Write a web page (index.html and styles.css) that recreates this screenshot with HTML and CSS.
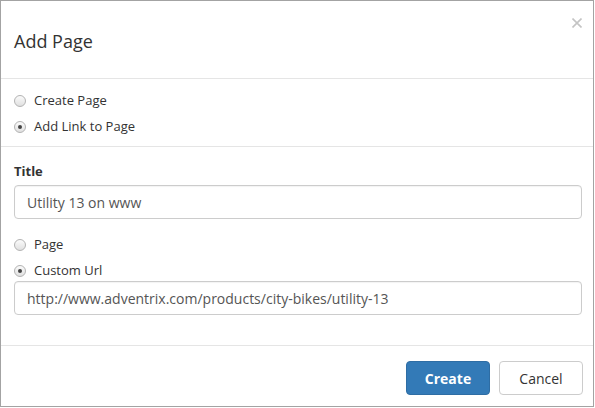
FILE: index.html
```html
<!DOCTYPE html>
<html>
<head>
<meta charset="utf-8">
<link rel="stylesheet" href="styles.css">
</head>
<body>
<div class="modal">
  <div class="modal-header">
    <h4 class="modal-title">Add Page</h4>
    <button class="close" type="button" aria-label="Close">
      <svg width="10" height="10" viewBox="0 0 10 10"><path d="M0.5 0.5 L9.5 9.5 M9.5 0.5 L0.5 9.5" stroke="#c4c4c4" stroke-width="1.6" fill="none"/></svg>
    </button>
  </div>
  <div class="modal-type">
    <label class="radio"><span class="radio-dot"></span>Create Page</label>
    <label class="radio"><span class="radio-dot checked"></span>Add Link to Page</label>
  </div>
  <div class="modal-body">
    <div class="field-label">Title</div>
    <div class="input">Utility 13 on www</div>
    <div class="link-type">
      <label class="radio"><span class="radio-dot"></span>Page</label>
      <label class="radio"><span class="radio-dot checked"></span>Custom Url</label>
    </div>
    <div class="input">http://www.adventrix.com/products/city-bikes/utility-13</div>
  </div>
  <div class="modal-footer">
    <button class="btn btn-primary" type="button">Create</button>
    <button class="btn btn-default" type="button">Cancel</button>
  </div>
</div>
</body>
</html>
```

FILE: styles.css
```css
* { box-sizing: border-box; }
html, body { margin: 0; padding: 0; background: #fff; }
body {
  font-family: "Open Sans", "Noto Sans", sans-serif;
  color: #333;
  font-size: 13px;
}
.modal {
  width: 594px;
  height: 407px;
  border: 1px solid #a3a3a3;
  background: #fff;
  display: flex;
  flex-direction: column;
}
.modal-header {
  height: 78px;
  border-bottom: 1px solid #e5e5e5;
  display: flex;
  justify-content: space-between;
  align-items: center;
  padding: 0 11px 0 13px;
}
.modal-title {
  margin: 2px 0 0 0;
  font-size: 18px;
  font-weight: 400;
  color: #333;
  line-height: 26px;
}
.close {
  align-self: flex-start;
  margin-top: 17px;
  padding: 0;
  border: 0;
  background: none;
  width: 10px;
  height: 10px;
  line-height: 0;
}
.modal-type {
  border-bottom: 1px solid #e5e5e5;
  padding: 8px 13px 7px;
  display: flex;
  flex-direction: column;
}
.radio {
  display: flex;
  align-items: center;
  height: 26px;
  font-size: 13px;
  color: #333;
}
.radio-dot {
  width: 12px;
  height: 12px;
  border-radius: 50%;
  border: 1px solid #b3b3b3;
  background: linear-gradient(#fbfbfb, #e0e0e0);
  margin: 2px 8px 0 0;
  display: flex;
  align-items: center;
  justify-content: center;
  flex: none;
}
.radio-dot.checked::after {
  content: "";
  width: 4px;
  height: 4px;
  border-radius: 50%;
  background: #444;
}
.modal-body {
  padding: 14px 11px 30px 13px;
  border-bottom: 1px solid #e5e5e5;
}
.field-label {
  font-weight: 700;
  font-size: 13px;
  line-height: 20px;
  margin-bottom: 4px;
}
.input {
  height: 34px;
  border: 1px solid #ccc;
  border-radius: 4px;
  padding: 0 12px;
  display: flex;
  align-items: center;
  font-size: 14px;
  color: #555;
  box-shadow: inset 0 1px 1px rgba(0,0,0,.05);
}
.link-type {
  margin-top: 14px;
  display: flex;
  flex-direction: column;
  gap: 4px;
}
.link-type .radio { height: 22px; }
.modal-footer {
  flex: 1;
  display: flex;
  justify-content: flex-end;
  align-items: flex-start;
  gap: 9px;
  padding: 15px 10px 0 13px;
}
.btn {
  height: 34px;
  border-radius: 4px;
  font-family: inherit;
  font-size: 14px;
  padding: 0;
  cursor: pointer;
}
.btn-primary {
  width: 84px;
  background: #337ab7;
  border: 1px solid #2e6da4;
  color: #fff;
  font-weight: 700;
}
.btn-default {
  width: 84px;
  background: #fff;
  border: 1px solid #ccc;
  color: #333;
}
```
